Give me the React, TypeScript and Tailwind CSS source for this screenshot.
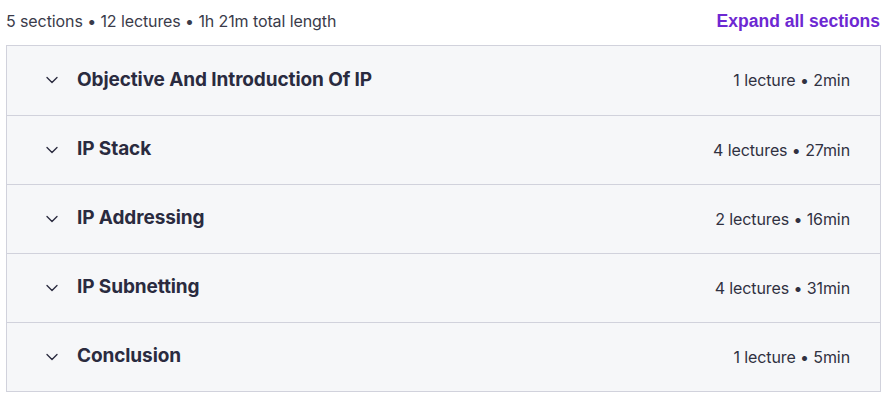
import { ChevronDown } from "lucide-react";

const sections = [
  { title: "Objective And Introduction Of IP", meta: "1 lecture • 2min" },
  { title: "IP Stack", meta: "4 lectures • 27min" },
  { title: "IP Addressing", meta: "2 lectures • 16min" },
  { title: "IP Subnetting", meta: "4 lectures • 31min" },
  { title: "Conclusion", meta: "1 lecture • 5min" },
];

export default function App() {
  return (
    <div className="w-[887px] h-[398px] bg-white font-['Inter',sans-serif] text-[#2d2f3f]">
      <div className="flex items-center justify-between pl-[6px] pr-[7px] h-[42px]">
        <span className="text-[16px] tracking-[-0.1px] text-[#3a3b4a]">5 sections • 12 lectures • 1h 21m total length</span>
        <button className="text-[17.5px] font-bold text-[#6d28d2] font-['Liberation_Sans',sans-serif]">
          Expand all sections
        </button>
      </div>
      <div className="mx-[6px] mt-[3px] w-[875px] border border-[#d1d2dc]">
        {sections.map((s, i) => (
          <div
            key={s.title}
            className={`flex items-center h-[69px] bg-[#f6f7f9] pl-[35px] pr-[30px] pb-[1px] ${i > 0 ? "border-t border-[#d1d2dc]" : ""}`}
          >
            <ChevronDown className="w-[20px] h-[20px] text-[#2a2b3f]" strokeWidth={1.6} />
            <span className="ml-[15px] text-[19px] font-bold tracking-[-0.1px] text-[#2a2b3f]">{s.title}</span>
            <span className="ml-auto text-[16px] tracking-[-0.1px] text-[#303141]">{s.meta}</span>
          </div>
        ))}
      </div>
    </div>
  );
}
